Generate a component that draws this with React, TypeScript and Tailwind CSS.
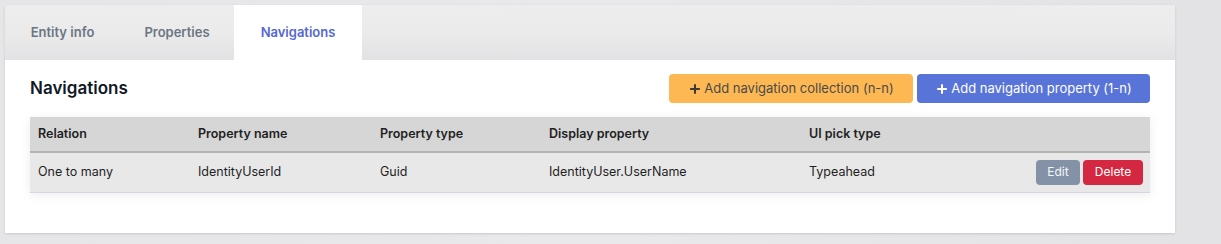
import { Plus } from "lucide-react";

const COLUMNS = ["Relation", "Property name", "Property type", "Display property", "UI pick type"];

const ROWS = [
  {
    relation: "One to many",
    name: "IdentityUserId",
    type: "Guid",
    display: "IdentityUser.UserName",
    pick: "Typeahead",
  },
];

const TABS = ["Entity info", "Properties", "Navigations"];

export default function App() {
  const active = "Navigations";

  return (
    <div
      className="h-[244px] w-[1221px] overflow-hidden bg-gradient-to-r from-[#e6e6e8] via-[#e9e9eb] to-[#e3e3e5] pl-[5px] pt-[5px]"
      style={{ fontFamily: "Inter, 'Noto Sans', sans-serif" }}
    >
      <div className="w-[1170px] bg-white shadow-sm">
        {/* tabs */}
        <div className="flex h-[55px] bg-gradient-to-b from-[#ededed] via-[#ebebeb] to-[#e2e2e4]">
          {TABS.map((tab) => (
            <button
              key={tab}
              className={`flex items-center justify-center text-[13px] font-semibold ${
                tab === "Entity info" ? "w-[115px]" : tab === "Properties" ? "w-[114px]" : "w-[128px]"
              } ${tab === active ? "bg-white text-[#5568d0]" : "text-[#6b7584]"}`}
            >
              {tab}
            </button>
          ))}
        </div>

        {/* content */}
        <div className="px-[25px] pb-[40px] pt-[14px]">
          <div className="flex items-center justify-between">
            <h2 className="text-[17px] font-semibold text-[#111827]">Navigations</h2>
            <div className="flex gap-[4px]">
              <button className="flex h-[29px] w-[244px] items-center justify-center gap-[2px] rounded-[4px] bg-[#fdb853] text-[13px] text-[#4a4a4a]">
                <Plus size={14} strokeWidth={3.5} className="text-[#3a3a3a]" />
                Add navigation collection (n-n)
              </button>
              <button className="flex h-[29px] w-[233px] items-center justify-center gap-[2px] rounded-[4px] bg-[#5874d8] text-[13px] text-white">
                <Plus size={14} strokeWidth={3.5} />
                Add navigation property (1-n)
              </button>
            </div>
          </div>

          <table className="mt-[14px] w-full border-collapse text-left text-[12.5px] text-[#1f1f1f] shadow-[0_2px_10px_rgba(0,0,0,0.08)]">
            <thead>
              <tr className="h-[35px] border-b-2 border-[#b3b3b3] bg-[#d6d6d6]">
                <th className="w-[160px] pl-[8px] font-semibold">{COLUMNS[0]}</th>
                <th className="w-[182px] pl-[8px] font-semibold">{COLUMNS[1]}</th>
                <th className="w-[169px] pl-[8px] font-semibold">{COLUMNS[2]}</th>
                <th className="w-[260px] pl-[8px] font-semibold">{COLUMNS[3]}</th>
                <th className="pl-[8px] font-semibold">{COLUMNS[4]}</th>
                <th />
              </tr>
            </thead>
            <tbody>
              {ROWS.map((row) => (
                <tr key={row.name} className="h-[40px] border-b border-[#d6d6de] bg-[#e8e8e8]">
                  <td className="pl-[8px]">{row.relation}</td>
                  <td className="pl-[8px]">{row.name}</td>
                  <td className="pl-[8px]">{row.type}</td>
                  <td className="pl-[8px]">{row.display}</td>
                  <td className="pl-[8px]">{row.pick}</td>
                  <td className="pr-[7px]">
                    <div className="flex justify-end gap-[3px]">
                      <button className="h-[25px] w-[44px] rounded-[4px] bg-[#8392a7] text-[12px] text-[#f4f6f8]">
                        Edit
                      </button>
                      <button className="h-[25px] w-[60px] rounded-[4px] bg-[#d42842] text-[12px] text-white">
                        Delete
                      </button>
                    </div>
                  </td>
                </tr>
              ))}
            </tbody>
          </table>
        </div>
      </div>
    </div>
  );
}
